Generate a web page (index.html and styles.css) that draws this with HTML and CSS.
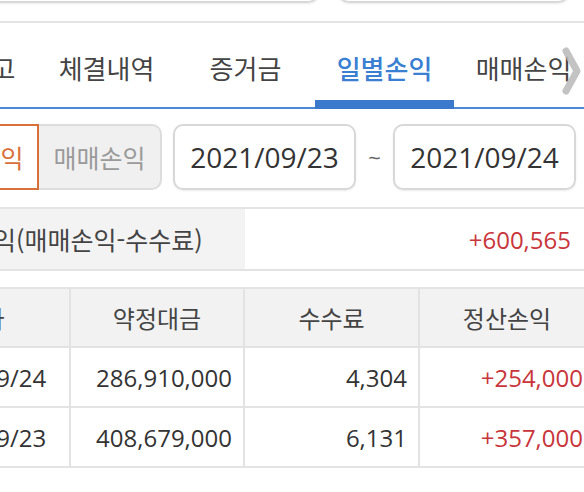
FILE: index.html
```html
<!DOCTYPE html>
<html lang="ko">
<head>
<meta charset="utf-8">
<title>일별손익</title>
<link rel="stylesheet" href="styles.css">
</head>
<body>
<div class="viewport">
  <div class="page">
    <div class="top-strip">
      <div class="field field-a"></div>
      <div class="field field-b"></div>
    </div>
    <nav class="tabs">
      <div class="tab">계좌잔고</div>
      <div class="tab">체결내역</div>
      <div class="tab">증거금</div>
      <div class="tab active">일별손익</div>
      <div class="tab">매매손익</div>
    </nav>
    <div class="filter">
      <div class="seg">
        <div class="seg-item selected">일별손익</div>
        <div class="seg-item">매매손익</div>
      </div>
      <div class="date">2021/09/23</div>
      <div class="tilde">~</div>
      <div class="date">2021/09/24</div>
    </div>
    <div class="summary">
      <div class="summary-label">정산손익(매매손익-수수료)</div>
      <div class="summary-value plus">+600,565</div>
    </div>
    <table class="grid">
      <colgroup>
        <col class="c1"><col class="c2"><col class="c3"><col class="c4">
      </colgroup>
      <thead>
        <tr><th>일자</th><th>약정대금</th><th>수수료</th><th>정산손익</th></tr>
      </thead>
      <tbody>
        <tr><td class="center">2021/09/24</td><td>286,910,000</td><td>4,304</td><td class="plus">+254,000</td></tr>
        <tr><td class="center">2021/09/23</td><td>408,679,000</td><td>6,131</td><td class="plus">+357,000</td></tr>
      </tbody>
    </table>
  </div>
  <svg class="more" width="22" height="50" viewBox="0 0 22 50" aria-hidden="true">
    <path d="M5 5 L16 25 L5 45" fill="none" stroke="#b9b9b9" stroke-width="7" stroke-linecap="round" stroke-linejoin="round" opacity="0.85"/>
  </svg>
</div>
</body>
</html>
```

FILE: styles.css
```css
html, body {
  margin: 0;
  padding: 0;
  background: #ffffff;
}
body {
  font-family: "Open Sans", "Noto Sans CJK KR", sans-serif;
  color: #333333;
}
.viewport {
  position: relative;
  width: 584px;
  height: 492px;
  overflow: hidden;
}
.page {
  width: 700px;
  margin-left: -106px;
}

/* top strip with bottoms of inputs */
.top-strip {
  display: flex;
  height: 21px;
  border-bottom: 2px solid #e4e4e4;
}
.field {
  height: 40px;
  margin-top: -37px;
  box-sizing: border-box;
  border: 2px solid #d9d9d9;
  border-radius: 12px;
  box-shadow: 0 1px 2px rgba(0,0,0,0.08);
}
.field-a { margin-left: 22px; width: 404px; }
.field-b { margin-left: 17px; width: 233px; }

/* tabs */
.tabs {
  display: flex;
  height: 84px;
  padding-left: 4px;
  border-bottom: 2px solid #4d8ad6;
}
.tab {
  position: relative;
  width: 139px;
  flex: none;
  display: flex;
  align-items: center;
  justify-content: center;
  font-family: "Noto Sans CJK KR", sans-serif;
  font-size: 26px;
  color: #444444;
  padding-top: 4px;
  box-sizing: border-box;
}
.tab.active {
  color: #3b7fd2;
  font-weight: 500;
}
.tab.active::after {
  content: "";
  position: absolute;
  left: 0;
  right: 0;
  bottom: -2px;
  height: 9px;
  background: #3a79cc;
}
.more {
  position: absolute;
  left: 561px;
  top: 46px;
}

/* filter */
.filter {
  display: flex;
  align-items: center;
  padding: 15px 0 17px 22px;
}
.seg {
  display: flex;
}
.seg-item {
  width: 123px;
  height: 66px;
  box-sizing: border-box;
  display: flex;
  align-items: center;
  justify-content: center;
  font-family: "Noto Sans CJK KR", sans-serif;
  font-size: 25px;
  background: #f0f0f0;
  color: #9a9a9a;
  border: 2px solid #dddddd;
  border-left: none;
  border-radius: 0 10px 10px 0;
}
.seg-item.selected {
  background: #ffffff;
  color: #d8703c;
  border: 2px solid #d8703c;
  border-radius: 10px 0 0 10px;
}
.date {
  width: 183px;
  height: 66px;
  box-sizing: border-box;
  border: 2px solid #d8d8d8;
  border-radius: 10px;
  box-shadow: 0 1px 2px rgba(0,0,0,0.08);
  display: flex;
  align-items: center;
  justify-content: center;
  font-size: 28px;
  color: #333333;
}
.seg + .date { margin-left: 11px; }
.tilde {
  width: 37px;
  text-align: center;
  font-size: 22px;
  color: #666666;
}

/* summary */
.summary {
  display: flex;
  height: 64px;
  box-sizing: border-box;
  border-top: 2px solid #e3e3e3;
  border-bottom: 2px solid #e3e3e3;
}
.summary-label {
  width: 351px;
  background: #f3f3f3;
  display: flex;
  align-items: center;
  padding-left: 30px;
  box-sizing: border-box;
  font-family: "Noto Sans CJK KR", sans-serif;
  font-size: 25px;
  color: #444444;
}
.summary-value {
  flex: 1;
  display: flex;
  align-items: center;
  justify-content: flex-end;
  padding-right: 23px;
  font-size: 24px;
}
.plus { color: #c9353a; }

/* table */
.grid {
  margin-top: 16px;
  width: 700px;
  border-collapse: collapse;
  table-layout: fixed;
}
.c1 { width: 175px; }
.c2 { width: 174px; }
.c3 { width: 175px; }
.c4 { width: 176px; }
.grid th, .grid td {
  border: 2px solid #e3e3e3;
  padding: 0 11px;
  font-weight: normal;
  white-space: nowrap;
}
.grid th {
  height: 57px;
  background: #f2f2f2;
  text-align: center;
  font-family: "Noto Sans CJK KR", sans-serif;
  font-size: 24px;
  color: #444444;
}
.grid td {
  height: 58px;
  text-align: right;
  font-size: 24px;
  color: #333333;
}
.grid td.center { text-align: center; }
.grid td.plus { color: #c9353a; }
```
